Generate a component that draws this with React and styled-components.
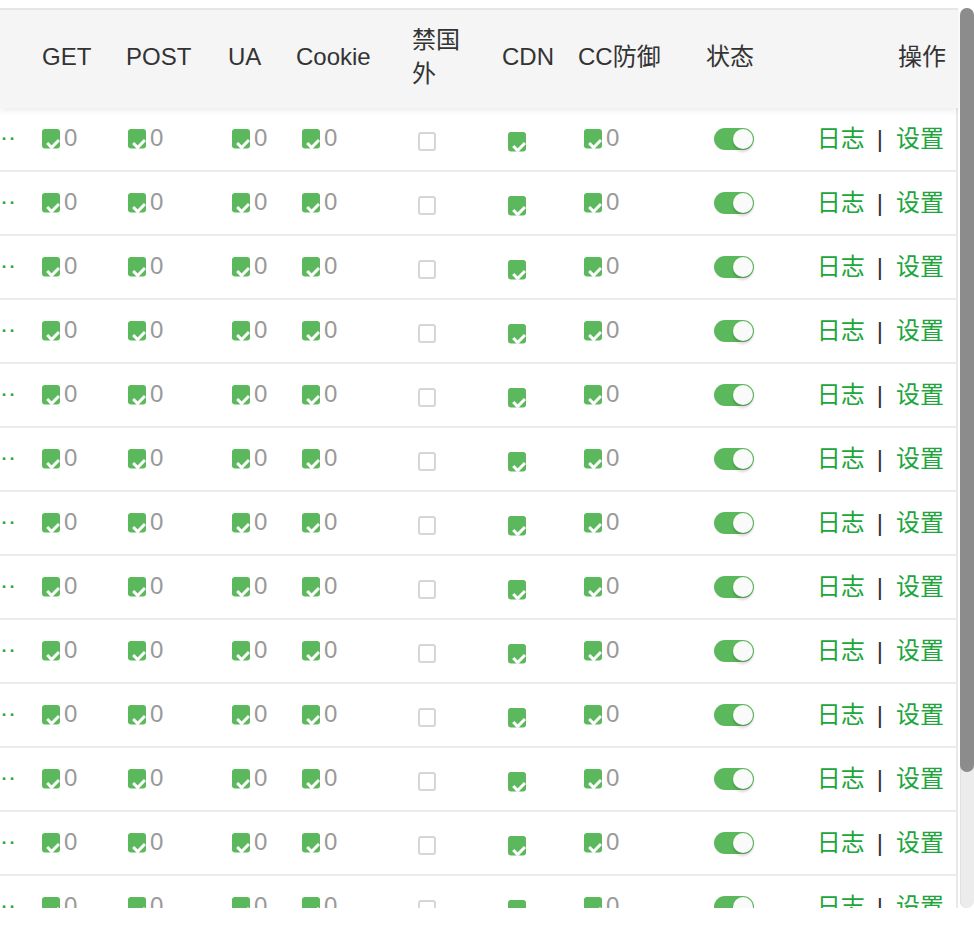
import React from 'react';
import styled, { createGlobalStyle } from 'styled-components';

const GREEN = '#5cb85c';
const LINK = '#20a53a';

const headCols = '26px 84px 102px 68px 116px 90px 76px 128px 110px 1fr';
const bodyCols = '26px 86px 104px 70px 116px 90px 76px 130px 110px 1fr';

const GlobalStyle = createGlobalStyle`
    html, body { margin: 0; padding: 0; background: #fff; }
    body {
        font-family: "Liberation Sans", "Noto Sans CJK SC", Arial, sans-serif;
        font-size: 24px;
        color: #333;
    }
`;

const Frame = styled.div`
    display: flex;
    margin-top: 8px;
    width: 974px;
    height: 900px;
`;

const Viewport = styled.div`
    flex: none;
    width: 960px;
    height: 900px;
    overflow: hidden;
`;

const ScrollTrack = styled.div`
    flex: none;
    width: 14px;
    height: 900px;
    border-radius: 7px;
    background: #ececec;
    box-shadow: inset 1px 0 0 #e0e0e0;
`;

const ScrollThumb = styled.div`
    height: 764px;
    border-radius: 7px;
    background: #8c8c8c;
`;

const Table = styled.div`
    width: 958px;
`;

const Head = styled.div`
    position: relative;
    z-index: 2;
    display: grid;
    grid-template-columns: ${headCols};
    height: 100px;
    box-sizing: border-box;
    background: #f5f5f5;
    border-top: 2px solid #e6e6e6;
    box-shadow: 0 3px 6px rgba(0, 0, 0, 0.07);
`;

const Th = styled.div`
    display: flex;
    align-items: center;
    justify-content: ${p => (p.$right ? 'flex-end' : 'flex-start')};
    padding: 0 ${p => (p.$right ? '12px' : '0')} 4px ${p => (p.$right ? '0' : '16px')};
    line-height: 34px;
    white-space: nowrap;
    color: #333;
`;

const Row = styled.div`
    display: grid;
    grid-template-columns: ${bodyCols};
    height: 64px;
    box-sizing: border-box;
    border-bottom: 2px solid #ebebeb;
    border-right: 2px solid #e8e8e8;
`;

const Td = styled.div`
    display: flex;
    align-items: center;
    justify-content: ${p => (p.$right ? 'flex-end' : 'flex-start')};
    padding: 0 ${p => (p.$right ? '12px' : '0')} 0 ${p => (p.$right ? '0' : '16px')};
    white-space: nowrap;
`;

const Domain = styled.div`
    display: flex;
    align-items: center;
    padding-bottom: 4px;
    color: ${LINK};
    white-space: nowrap;
`;

const Count = styled.span`
    margin-left: 4px;
    padding-bottom: 3px;
    line-height: 24px;
    color: #999;
`;

const Box = styled.span`
    display: inline-block;
    width: 18px;
    height: 19px;
    margin-top: 5px;
    box-sizing: border-box;
    border: 2px solid #d6d6d6;
    border-radius: 3px;
    background: #fff;
`;

const Switch = styled.span`
    position: relative;
    display: inline-block;
    width: 40px;
    height: 22px;
    border-radius: 11px;
    background: ${GREEN};
`;

const Knob = styled.span`
    position: absolute;
    right: 1px;
    top: 1px;
    width: 20px;
    height: 20px;
    border-radius: 50%;
    background: #fafafa;
    box-shadow: 0 3px 3px rgba(0, 0, 0, 0.16);
`;

const Links = styled.span`
    line-height: 24px;
    a { color: ${LINK}; text-decoration: none; }
`;

const Sep = styled.span`
    margin: 0 13px 0 12px;
    color: #333;
`;

const Icon = styled.svg`
    flex: none;
    margin-top: ${p => (p.$low ? '5px' : '0')};
`;

function Checked({ low }) {
    return (
        <Icon $low={low} width="18" height="20" viewBox="0 0 18 20">
            <rect x="0" y="0" width="18" height="19.5" rx="3" fill={GREEN} />
            <path d="M5.2 14 L9.6 18.6 L17 11" fill="none" stroke="#fff" strokeWidth="3" strokeLinejoin="miter" />
        </Icon>
    );
}

function Counted() {
    return (
        <>
            <Checked />
            <Count>0</Count>
        </>
    );
}

const headers = ['GET', 'POST', 'UA', 'Cookie'];
const rows = Array.from({ length: 15 }, (_, i) => i);

export default function App() {
    return (
        <>
            <GlobalStyle />
            <Frame>
                <Viewport>
                    <Table>
                        <Head>
                            <Th />
                            {headers.map(h => <Th key={h}>{h}</Th>)}
                            <Th>禁国<br />外</Th>
                            <Th>CDN</Th>
                            <Th>CC防御</Th>
                            <Th>状态</Th>
                            <Th $right>操作</Th>
                        </Head>
                        {rows.map(r => (
                            <Row key={r}>
                                <Domain>··</Domain>
                                <Td><Counted /></Td>
                                <Td><Counted /></Td>
                                <Td><Counted /></Td>
                                <Td><Counted /></Td>
                                <Td><Box /></Td>
                                <Td><Checked low /></Td>
                                <Td><Counted /></Td>
                                <Td><Switch><Knob /></Switch></Td>
                                <Td $right>
                                    <Links>
                                        <a href="#log">日志</a>
                                        <Sep>|</Sep>
                                        <a href="#set">设置</a>
                                    </Links>
                                </Td>
                            </Row>
                        ))}
                    </Table>
                </Viewport>
                <ScrollTrack>
                    <ScrollThumb />
                </ScrollTrack>
            </Frame>
        </>
    );
}
